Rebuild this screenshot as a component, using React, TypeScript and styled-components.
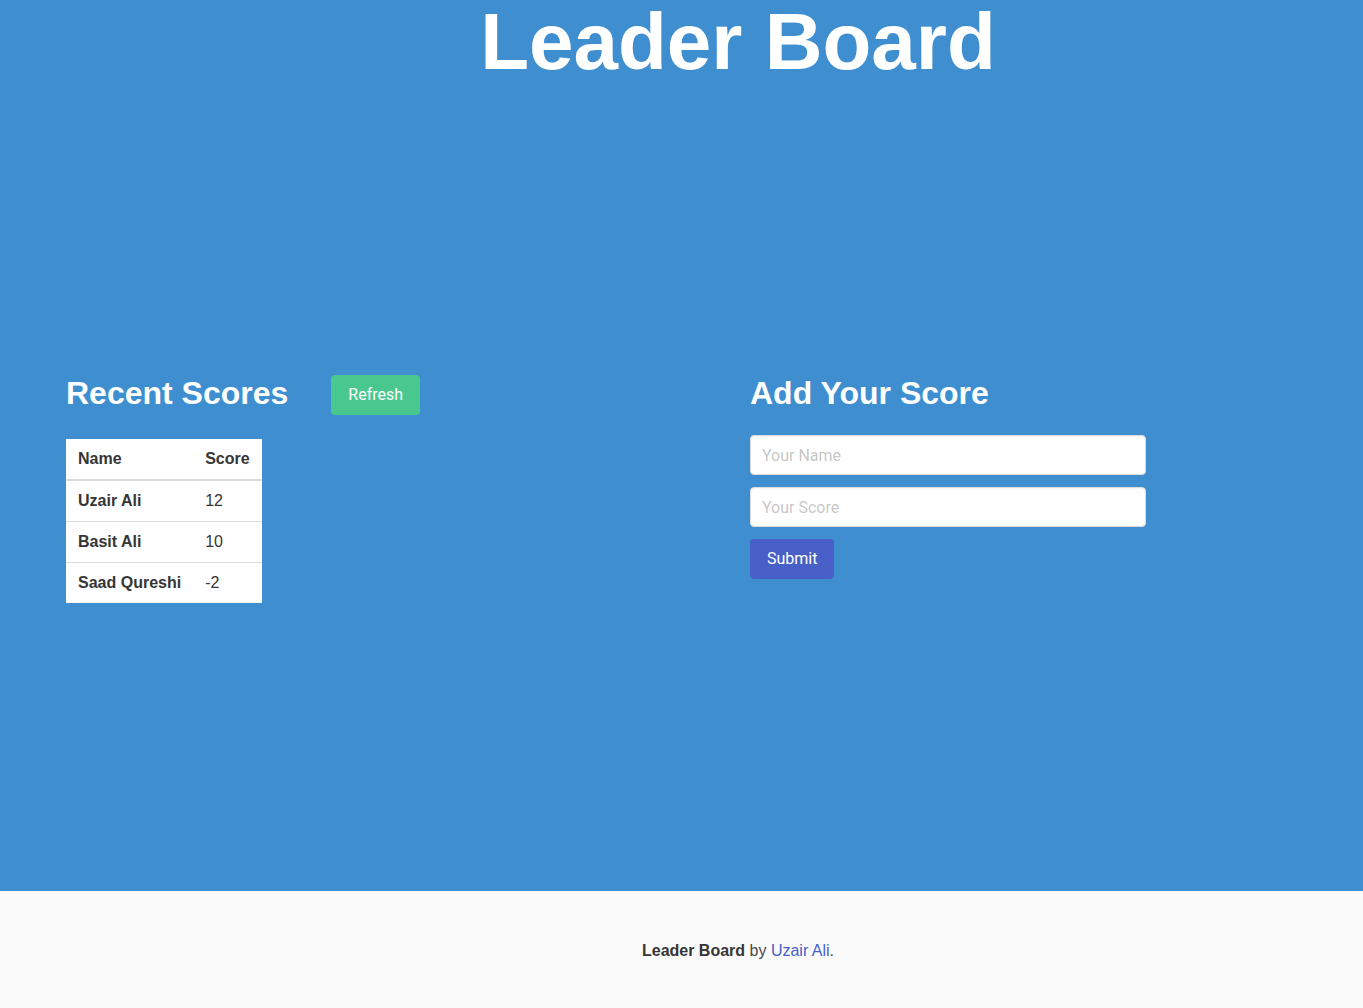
import React from "react";
import styled, { createGlobalStyle } from "styled-components";

const GlobalStyle = createGlobalStyle`
  html, body { margin: 0; padding: 0; background: #fafafa; }
  body { font-family: "Liberation Sans", Arial, sans-serif; font-size: 16px; color: #4a4a4a; }
  * { box-sizing: border-box; }
`;

const Page = styled.div`
  width: 100%;
`;

const Hero = styled.section`
  background: #3e8ed0;
  height: 891px;
  display: flex;
  flex-direction: column;
`;

const Title = styled.h1`
  margin: 0;
  padding: 2px 0 0 113px;
  text-align: center;
  font-family: "Liberation Sans", Arial, sans-serif;
  font-weight: 700;
  font-size: 80px;
  line-height: 80px;
  color: #fff;
  white-space: nowrap;
`;

const Columns = styled.div`
  display: grid;
  grid-template-columns: 660px 1fr;
  column-gap: 24px;
  padding: 0 66px;
  margin-top: 293px;
`;

const Column = styled.div`
  display: flex;
  flex-direction: column;
  align-items: flex-start;
`;

const HeadRow = styled.div`
  display: flex;
  align-items: flex-start;
  gap: 43px;
  margin-bottom: 24px;
`;

const Heading = styled.h2<{ $mb?: number }>`
  margin: 0 0 ${(p) => p.$mb ?? 0}px;
  font-family: "Liberation Sans", Arial, sans-serif;
  font-weight: 700;
  font-size: 32px;
  line-height: 36px;
  color: #fff;
`;

const Button = styled.button<{ $color: string }>`
  height: 40px;
  padding: 0 16px;
  border: 1px solid transparent;
  border-radius: 4px;
  background: ${(p) => p.$color};
  color: #fff;
  font-family: Roboto, "Noto Sans", sans-serif;
  font-size: 16px;
  line-height: 24px;
  cursor: pointer;
`;

const Table = styled.table`
  border-collapse: collapse;
  background: #fff;
  color: #363636;
  font-family: "Liberation Sans", Arial, sans-serif;
  font-size: 16px;
  line-height: 24px;
`;

const Th = styled.th`
  text-align: left;
  font-weight: 700;
  padding: 8px 12px;
  border-bottom: 2px solid #dbdbdb;
`;

const Td = styled.td<{ $bold?: boolean; $last?: boolean }>`
  padding: 8px 12px;
  font-weight: ${(p) => (p.$bold ? 700 : 400)};
  border-bottom: ${(p) => (p.$last ? "0" : "1px solid #dbdbdb")};
`;

const Form = styled.form`
  width: 396px;
  display: flex;
  flex-direction: column;
  align-items: flex-start;
  gap: 12px;
`;

const Input = styled.input`
  width: 100%;
  height: 40px;
  padding: 0 11px;
  border: 1px solid #dbdbdb;
  border-radius: 4px;
  background: #fff;
  box-shadow: inset 0 1px 2px rgba(10, 10, 10, 0.05);
  font-family: Roboto, "Noto Sans", sans-serif;
  font-size: 16px;
  color: #363636;
  outline: none;
  &::placeholder { color: rgba(54, 54, 54, 0.3); }
`;

const Footer = styled.footer`
  background: #fafafa;
  padding: 48px 24px 96px 137px;
  text-align: center;
  font-size: 16px;
  line-height: 24px;
  color: #4a4a4a;
  strong { color: #363636; font-weight: 700; }
`;

const Link = styled.a`
  color: #485fc7;
  text-decoration: none;
`;

const scores = [
  { name: "Uzair Ali", score: 12 },
  { name: "Basit Ali", score: 10 },
  { name: "Saad Qureshi", score: -2 },
];

export default function App() {
  return (
    <Page>
      <GlobalStyle />
      <Hero>
        <Title>Leader Board</Title>
        <Columns>
          <Column>
            <HeadRow>
              <Heading>Recent Scores</Heading>
              <Button $color="#48c78e">Refresh</Button>
            </HeadRow>
            <Table>
              <thead>
                <tr>
                  <Th>Name</Th>
                  <Th>Score</Th>
                </tr>
              </thead>
              <tbody>
                {scores.map((s, i) => (
                  <tr key={s.name}>
                    <Td $bold $last={i === scores.length - 1}>{s.name}</Td>
                    <Td $last={i === scores.length - 1}>{s.score}</Td>
                  </tr>
                ))}
              </tbody>
            </Table>
          </Column>
          <Column>
            <Heading $mb={24}>Add Your Score</Heading>
            <Form onSubmit={(e) => e.preventDefault()}>
              <Input type="text" placeholder="Your Name" />
              <Input type="number" placeholder="Your Score" />
              <Button $color="#485fc7" type="submit">Submit</Button>
            </Form>
          </Column>
        </Columns>
      </Hero>
      <Footer>
        <strong>Leader Board</strong> by <Link href="#">Uzair Ali</Link>.
      </Footer>
    </Page>
  );
}
